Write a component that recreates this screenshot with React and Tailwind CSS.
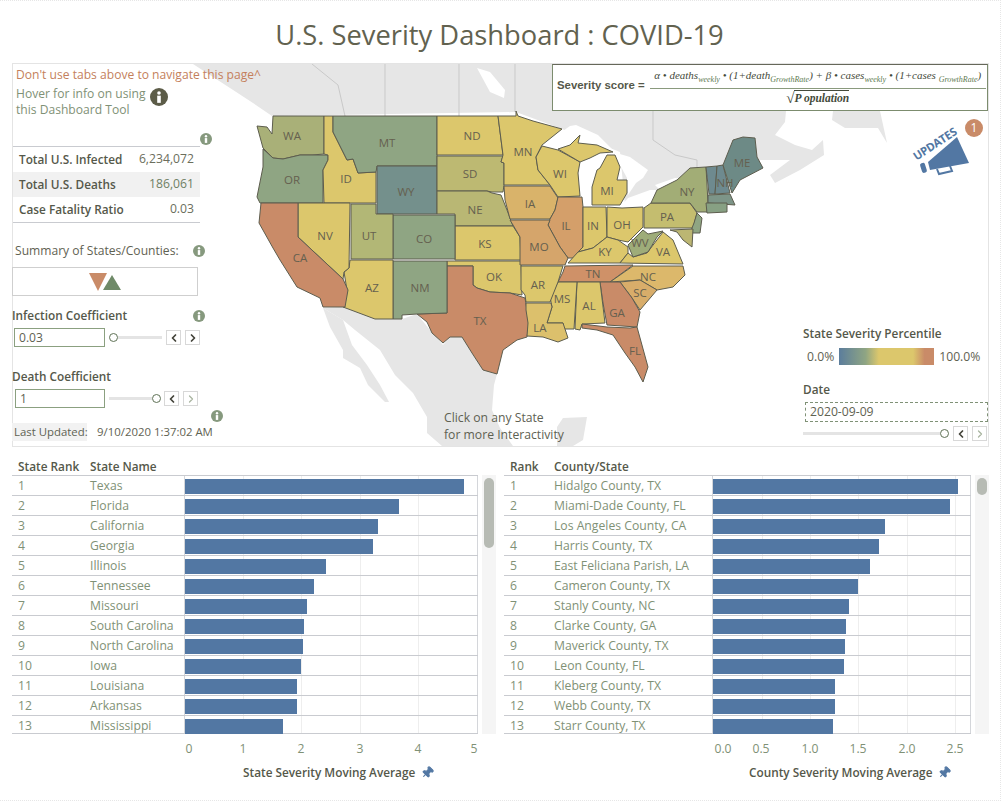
import { ChevronLeft, ChevronRight, Pin } from 'lucide-react';

const ORANGE = '#c98b68';
const GREEN = '#8fa583';
const YELLOW = '#dcc76c';

// state shapes are in page pixels, the map svg's viewBox starts at the panel corner
const STATES = [
  { id: 'WA', fill: '#a9b078', at: [292, 135], pts: '273,116 324,116 324,154 312,155 300,155 283,159 273,158 265,150 263,148 257,126 267,127 272,134' },
  { id: 'OR', fill: GREEN, at: [292, 179], pts: '263,149 273,158 283,159 300,155 328,155 328,160 323,170 323,203 260,203 257,197 263,167' },
  { id: 'ID', fill: YELLOW, at: [346, 178], pts: '324,116 333,116 333,132 347,160 353,159 358,173 376,172 376,203 324,203 323,170 328,160 328,155 324,154' },
  { id: 'MT', fill: GREEN, at: [387, 142], pts: '333,116 437,116 437,166 377,166 376,172 358,173 353,159 347,160 333,132' },
  { id: 'WY', fill: '#74908c', at: [406, 191], pts: '377,166 437,166 437,214 377,214' },
  { id: 'ND', fill: YELLOW, at: [472, 135], pts: '437,116 498,116 503,155 437,155' },
  { id: 'SD', fill: '#bdb972', at: [470, 173], pts: '437,156 503,156 501,162 504,163 504,185 503,192 492,192 487,191 437,191' },
  { id: 'NE', fill: '#b9b774', at: [475, 209], pts: '437,191 487,191 492,193 501,195 507,210 513,226 455,226 455,214 437,214' },
  { id: 'KS', fill: YELLOW, at: [485, 243], pts: '455,226 513,226 520,237 521,260 455,260' },
  { id: 'OK', fill: YELLOW, at: [494, 276], pts: '447,261 521,261 522,295 510,293 490,292 477,288 473,285 473,266 447,266' },
  { id: 'TX', fill: ORANGE, at: [480, 320], pts: '447,266 473,266 473,285 477,288 490,292 510,293 525,298 527,310 529,323 527,337 517,340 503,350 497,374 483,370 472,353 462,337 450,337 443,343 432,333 427,322 417,314 447,313' },
  { id: 'NM', fill: GREEN, at: [420, 287], pts: '393,261 447,261 447,313 417,314 402,315 402,319 393,319' },
  { id: 'CO', fill: GREEN, at: [424, 238], pts: '393,215 455,215 455,259 393,259' },
  { id: 'UT', fill: '#b2b776', at: [369, 235], pts: '351,204 376,204 376,214 393,214 393,259 351,259' },
  { id: 'AZ', fill: YELLOW, at: [372, 287], pts: '350,260 393,260 393,319 375,319 343,307 347,290 344,272 349,268' },
  { id: 'NV', fill: YELLOW, at: [325, 235], pts: '298,203 350,203 349,268 344,272 343,279 298,237' },
  { id: 'CA', fill: ORANGE, at: [300, 257], pts: '261,203 298,203 298,237 343,279 348,290 345,307 323,307 320,298 297,287 280,260 273,248 259,223' },
  { id: 'MN', fill: YELLOW, at: [523, 151], pts: '498,116 516,116 516,111 518,116 533,121 562,129 542,145 536,157 538,170 550,185 504,185 504,163 501,162 503,155' },
  { id: 'WI', fill: YELLOW, at: [560, 173], pts: '542,146 558,150 580,162 578,173 580,196 558,197 550,185 538,170 536,157' },
  { id: 'IA', fill: '#d9b36a', at: [530, 203], pts: '504,186 550,186 558,198 555,210 550,219 510,219 505,200' },
  { id: 'IL', fill: '#d49f6a', at: [566, 225], pts: '558,197 582,197 583,207 583,247 575,258 568,258 560,247 548,225 550,219 555,210' },
  { id: 'MO', fill: '#d5a56b', at: [539, 246], pts: '510,220 550,220 548,225 560,247 568,258 565,265 520,265 520,237 513,225' },
  { id: 'IN', fill: YELLOW, at: [593, 225], pts: '583,207 606,207 607,237 593,248 578,252 583,247' },
  { id: 'OH', fill: YELLOW, at: [622, 224], pts: '607,207 622,208 643,207 643,227 628,242 618,240 607,237' },
  { id: 'MI', fill: YELLOW, at: [607, 190], pts: '592,205 592,187 597,170 600,168 607,155 615,155 620,167 617,180 627,180 627,193 620,205' },
  { id: '', fill: YELLOW, pts: '558,149 570,145 580,135 578,143 597,145 613,152 600,153 590,158 580,162' },
  { id: 'KY', fill: YELLOW, at: [605, 251], pts: '568,263 578,252 593,248 607,237 618,240 628,247 628,253 620,263' },
  { id: 'TN', fill: '#cf9168', at: [593, 273], pts: '565,266 633,265 610,282 558,282 563,272' },
  { id: 'VA', fill: YELLOW, at: [663, 251], pts: '620,263 628,253 633,257 647,253 663,232 673,240 683,264' },
  { id: 'WV', fill: '#9eac79', at: [640, 242], pts: '628,245 643,230 648,234 663,231 657,237 648,252 633,257' },
  { id: 'NC', fill: '#dcb86b', at: [648, 276], pts: '633,266 683,266 685,275 673,287 657,290 640,280 610,282' },
  { id: 'SC', fill: '#d8ad6a', at: [640, 292], pts: '620,282 640,280 657,290 640,310 632,298' },
  { id: 'GA', fill: ORANGE, at: [617, 312], pts: '600,282 620,282 632,298 640,312 637,327 607,325 603,303' },
  { id: 'AL', fill: YELLOW, at: [589, 305], pts: '577,282 600,282 605,323 582,324 580,330 575,329' },
  { id: 'MS', fill: YELLOW, at: [562, 298], pts: '558,282 577,282 574,329 562,329 563,323 547,323 552,307 550,297' },
  { id: 'AR', fill: YELLOW, at: [538, 284], pts: '521,266 563,266 558,282 550,302 526,302 525,295 521,290' },
  { id: 'LA', fill: '#dcc06c', at: [540, 327], pts: '526,303 551,303 552,307 547,323 563,323 568,338 558,342 543,337 527,336 528,323 526,310' },
  { id: 'FL', fill: ORANGE, at: [635, 350], pts: '582,324 607,327 630,328 637,327 648,367 643,382 635,367 625,353 613,335 597,330 582,328' },
  { id: 'PA', fill: '#c4bd6f', at: [667, 216], pts: '651,203 690,203 697,213 693,228 644,228 644,208' },
  { id: 'NY', fill: '#a2ad76', at: [687, 191], pts: '651,203 657,190 677,180 690,168 706,167 708,203 707,212 697,212 690,203' },
  { id: '', fill: GREEN, pts: '697,213 702,218 700,233 690,233 694,223' },
  { id: '', fill: '#bcb672', pts: '670,230 693,229 692,247 683,240 677,232' },
  { id: 'VT', fill: '#6e8a8f', pts: '706,167 717,166 715,194 709,194' },
  { id: 'NH', fill: '#6e8a8f', at: [725, 182], pts: '717,166 723,165 730,193 715,194' },
  { id: '', fill: '#7d9588', pts: '708,195 730,194 735,205 708,203' },
  { id: '', fill: '#87a083', pts: '706,203 727,203 727,212 707,213' },
  { id: 'ME', fill: '#6d8a86', at: [742, 162], pts: '723,165 733,140 743,137 755,138 757,157 763,168 740,180 732,193' },
];

const STATE_ROWS = [
  ['Texas', 279], ['Florida', 214], ['California', 193], ['Georgia', 188], ['Illinois', 141],
  ['Tennessee', 129], ['Missouri', 122], ['South Carolina', 119], ['North Carolina', 118],
  ['Iowa', 116], ['Louisiana', 112], ['Arkansas', 112], ['Mississippi', 98],
];
const COUNTY_ROWS = [
  ['Hidalgo County, TX', 245], ['Miami-Dade County, FL', 237], ['Los Angeles County, CA', 172],
  ['Harris County, TX', 166], ['East Feliciana Parish, LA', 157], ['Cameron County, TX', 145],
  ['Stanly County, NC', 136], ['Clarke County, GA', 133], ['Maverick County, TX', 132],
  ['Leon County, FL', 131], ['Kleberg County, TX', 122], ['Webb County, TX', 122], ['Starr County, TX', 120],
];

function InfoDot({ big }) {
  return (
    <svg viewBox="0 0 20 20" className={big ? 'w-[18px] h-[18px]' : 'w-[12px] h-[12px]'}>
      <circle cx="10" cy="10" r="10" fill={big ? '#5c5c48' : '#86997e'} />
      <circle cx="10" cy="5.5" r="2" fill="white" />
      <rect x="8" y="8.5" width="4" height="8" fill="white" />
    </svg>
  );
}

function Stepper({ nextOff }) {
  return (
    <div className="flex gap-[4px]">
      <div className="w-[15px] h-[15px] border border-[#d8d8d8] bg-white flex items-center justify-center">
        <ChevronLeft size={12} strokeWidth={3.5} className="text-[#44443a]" />
      </div>
      <div className="w-[15px] h-[15px] border border-[#d8d8d8] bg-white flex items-center justify-center">
        <ChevronRight size={12} strokeWidth={nextOff ? 2.5 : 3.5} className={nextOff ? 'text-[#a9b5a0]' : 'text-[#44443a]'} />
      </div>
    </div>
  );
}

function Slider({ end, width }) {
  return (
    <div className={`flex items-center ${width}`}>
      {end ? (
        <>
          <div className="flex-1 h-[3px] bg-[#e4e4e4]" />
          <div className="w-[9px] h-[9px] rounded-full border border-[#5f7256] bg-white" />
        </>
      ) : (
        <>
          <div className="w-[9px] h-[9px] rounded-full border border-[#5f7256] bg-white" />
          <div className="flex-1 h-[3px] bg-[#e4e4e4]" />
        </>
      )}
    </div>
  );
}

function StatRow({ label, value, shaded, valueColor }) {
  return (
    <div className={`flex justify-between items-center h-[25px] pl-[6px] pr-[6px] ${shaded ? 'bg-[#f1f1f1]' : ''}`}>
      <span className="text-[11.8px] font-semibold text-[#55584a]">{label}</span>
      <span className={`text-[12.2px] ${valueColor}`}>{value}</span>
    </div>
  );
}

function MapLayer() {
  return (
    <svg viewBox="13 64 975 382" className="absolute left-0 top-0 w-[975px] h-[382px]">
      <g fill="#e6e6e6">
        <polygon points="193,64 552,64 552,111 786,111 785,122 775,135 795,145 812,150 823,140 824,155 800,170 775,183 770,175 790,160 760,160 740,180 723,165 706,167 690,168 677,180 657,190 640,205 625,205 620,152 562,129 516,112 272,116 253,103 230,88" />
        <polygon points="833,111 880,111 887,143 878,128 845,128 832,120" />
        <polygon points="323,308 345,307 375,319 402,319 417,314 430,330 443,345 450,337 462,337 472,353 483,370 497,374 494,385 492,410 500,428 513,446 442,446 427,433 427,417 413,393 395,375 380,350 355,330 343,320" />
        <polygon points="323,308 343,320 352,345 367,365 380,385 389,402 385,402 368,385 360,368 343,358 343,350 330,327" />
        <polygon points="557,427 563,418 587,417 583,440 573,446 557,446" />
      </g>
      <g fill="white">
        <polygon points="477,68 490,72 505,90 504,98 490,92" />
        <polygon points="543,146 560,133 570,126 576,125 598,135 611,148 615,153 596,152 582,161 572,148 558,150" />
        <polygon points="580,163 597,155 607,154 595,170 592,177 590,205 584,207 582,195 578,175" />
        <polygon points="613,152 630,157 648,170 643,178 636,183 628,195 627,178" />
        <polygon points="620,207 628,198 650,190 657,190 651,203 644,207" />
        <polygon points="655,185 675,178 682,179 660,190" />
      </g>
      <g fill="none" stroke="#c9c9c9" strokeWidth="1">
        <path d="M312 64 L338 85 L345 116" />
        <path d="M385 64 V116 M459 64 V116 M515 64 V112" />
        <path d="M653 111 V140 L675 155 L697 160 V167" />
      </g>
      <g stroke="#5d5d4e" strokeWidth="1" strokeLinejoin="round">
        {STATES.map((s, i) => (
          <polygon key={i} points={s.pts} fill={s.fill} />
        ))}
      </g>
      <g fontFamily="'Open Sans', sans-serif" fontSize="11.5" fill="#65604f" textAnchor="middle" dominantBaseline="central">
        {STATES.filter((s) => s.at).map((s) => (
          <text key={s.id} x={s.at[0]} y={s.at[1]}>{s.id}</text>
        ))}
      </g>
    </svg>
  );
}

function Formula() {
  const sub = 'text-[8px] text-[#5d7a50] align-[-3px]';
  return (
    <div className="w-[436px] h-[47px] border border-[#7c8c6e] border-t-[#66685a] bg-white flex items-center pl-[4px] pb-[3px] gap-[5px]">
      <span className="font-['Liberation_Sans',sans-serif] text-[11.4px] font-bold text-[#55584a] whitespace-nowrap">Severity score =</span>
      <div className="w-[336px] flex flex-col items-center font-['Liberation_Serif',serif] text-[#444a3a]">
        <div className="w-full border-b border-[#8a9a7d] text-[11px] italic whitespace-nowrap leading-[16px] text-center">
          α • deaths<span className={sub}>weekly</span> • (1+death<span className={sub}>GrowthRate</span>) + β • cases<span className={sub}>weekly</span> • (1+cases <span className={sub}>GrowthRate</span>)
        </div>
        <div className="flex items-end text-[11.5px] font-bold italic leading-[14px] mt-[1px]">
          <span className="text-[15px] not-italic">√</span>
          <span className="border-t border-[#444a3a]">P opulation</span>
        </div>
      </div>
    </div>
  );
}

function UpdatesBadge() {
  return (
    <div className="absolute left-[900px] top-[56px] w-[75px] h-[60px]">
      <svg viewBox="0 0 75 60" className="absolute left-0 top-0 w-[75px] h-[60px]">
        <polygon points="15,42 44,17 56,43 17,50" fill="#5277a3" />
        <rect x="8" y="43" width="5" height="10" rx="2" transform="rotate(-18 10 48)" fill="#5277a3" />
        <path d="M24 49 L26 54 L39 51 L37 46" fill="none" stroke="#5277a3" strokeWidth="2" />
      </svg>
      <span className="absolute left-[-3px] top-[15px] origin-center -rotate-[33deg] text-[11.4px] font-bold text-[#5277a3] font-['Open_Sans',sans-serif] tracking-tight">UPDATES</span>
      <span className="absolute right-[5px] top-[-1px] w-[18px] h-[18px] rounded-full bg-[#c98b68] text-white text-[12px] leading-[18px] text-center">1</span>
    </div>
  );
}

function BarTable({ head1, head2, rows, rankCol, nameCol, barCol, grid, ticks, title, titleClass, thumb }) {
  return (
    <div>
      <div className="flex h-[17px] items-center text-[11.8px] font-semibold text-[#55584a]">
        <span className={`${rankCol} pl-[6px]`}>{head1}</span>
        <span className={nameCol}>{head2}</span>
      </div>
      <div className="flex">
        <div className="relative border-t border-[#c9cbd0]">
          {rows.map(([name, w], i) => (
            <div key={name} className="flex h-[20px] border-b border-[#c9cbd0] last:h-[18px] text-[12.2px] text-[#7f9176]">
              <span className={`${rankCol} pl-[6px] leading-[19px]`}>{i + 1}</span>
              <span className={`${nameCol} leading-[19px] whitespace-nowrap`}>{name}</span>
              <div className={`${barCol} relative border-l border-r border-[#d4d6da] pt-[3px]`}>
                {grid.map((x) => (
                  <span key={x} className="absolute top-0 bottom-0 w-px bg-[#eeeeee]" style={{ left: x }} />
                ))}
                <div className="relative h-[15px] bg-[#5277a3]" style={{ width: w }} />
              </div>
            </div>
          ))}
        </div>
        <div className="ml-[4px] w-[14px] bg-[#f5f5f5] px-[2px] pt-[3px]">
          <div className={`w-[10px] rounded-full bg-[#b7bbb4] ${thumb}`} />
        </div>
      </div>
      <div className="flex">
        <div className={rankCol} />
        <div className={nameCol} />
        <div className={`${barCol} relative h-[26px] text-[12.2px] text-[#7f9176]`}>
          {ticks.map(([label, x]) => (
            <span key={label} className="absolute top-[6px] -translate-x-1/2" style={{ left: x }}>{label}</span>
          ))}
        </div>
      </div>
      <div className={`flex items-center gap-[6px] text-[11.8px] font-semibold text-[#55584a] ${titleClass}`}>
        <span className="whitespace-nowrap">{title}</span>
        <Pin size={13} strokeWidth={2} className="rotate-45 text-[#5277a3] fill-[#5277a3]" />
      </div>
    </div>
  );
}

export default function App() {
  return (
    <div className="w-[1001px] h-[801px] bg-white font-['Open_Sans',sans-serif] overflow-hidden border-t border-r border-b border-dotted border-[#e6e6e6]">
      <h1 className="h-[62px] pt-[15px] text-center text-[27.3px] leading-[38px] text-[#62624f] pr-[1px]">
        U.S. Severity Dashboard : COVID-19
      </h1>

      <div className="relative ml-[12px] w-[977px] h-[384px] border border-[#e4e4e4]">
        <MapLayer />
        <div className="relative flex h-full">
          {/* left controls */}
          <div className="w-[202px] shrink-0 text-[12.1px]">
            <p className="h-[22px] pl-[3px] pt-[2px] leading-[18px] text-[#c47f5c] whitespace-nowrap">Don't use tabs above to navigate this page^</p>
            <div className="relative pl-[3px] leading-[16px] text-[#7f9176]">
              <p>Hover for info on using</p>
              <p>this Dashboard Tool</p>
              <span className="absolute left-[137px] top-[2px]"><InfoDot big /></span>
            </div>
            <div className="flex justify-end h-[12px] mt-[15px] w-[199px]"><InfoDot /></div>
            <div className="mt-[1px] w-[187px] border-t border-b border-[#c9cbd0]">
              <StatRow label="Total U.S. Infected" value="6,234,072" valueColor="text-[#6b6e5c]" />
              <StatRow label="Total U.S. Deaths" value="186,061" shaded valueColor="text-[#6f8064]" />
              <StatRow label="Case Fatality Ratio" value="0.03" valueColor="text-[#6b6e5c]" />
            </div>
            <div className="flex justify-between items-center w-[192px] h-[14px] mt-[21px] pl-[2px]">
              <span className="text-[#5f6252] whitespace-nowrap">Summary of States/Counties:</span>
              <InfoDot />
            </div>
            <div className="mt-[9px] -ml-px w-[186px] h-[29px] border border-[#cfcfcf] flex justify-center items-center">
              <svg viewBox="0 0 34 20" className="w-[34px] h-[20px]">
                <polygon points="1,1 19,1 10,19" fill="#c98b68" />
                <polygon points="15,18 33,18 24,3" fill="#6f8a68" />
              </svg>
            </div>
            <div className="flex justify-between items-center w-[193px] h-[16px] mt-[12px] -ml-px">
              <span className="font-semibold text-[11.8px] text-[#55584a]">Infection Coefficient</span>
              <InfoDot />
            </div>
            <div className="flex items-center mt-[4px] pl-px">
              <div className="w-[91px] h-[19px] border border-[#8ba080] bg-white pl-[4px] leading-[17px] text-[#5f6252]">0.03</div>
              <Slider width="w-[53px] ml-[4px] mr-[4px]" />
              <Stepper />
            </div>
            <p className="mt-[21px] -ml-px font-semibold text-[11.8px] leading-[16px] text-[#55584a]">Death Coefficient</p>
            <div className="flex items-center mt-[5px] pl-[2px]">
              <div className="w-[90px] h-[19px] border border-[#8ba080] bg-white pl-[4px] leading-[17px] text-[#5f6252]">1</div>
              <Slider end width="w-[52px] ml-[4px] mr-[3px]" />
              <Stepper nextOff />
            </div>
            <div className="flex justify-end h-[12px] mt-[2px] w-[210px]"><InfoDot /></div>
            <div className="flex items-center -ml-px h-[16px] mt-[2px] text-[11.4px] whitespace-nowrap text-[#5f6252]">
              <span className="w-[75px] pl-[2px] bg-[#f2f2f2] mr-[10px]">Last Updated:</span>
              <span>9/10/2020 1:37:02 AM</span>
            </div>
          </div>

          {/* center hint */}
          <div className="w-[337px] shrink-0 flex flex-col justify-end pb-[3px] pl-[229px] text-[12.2px] leading-[17px] text-[#5e6152] whitespace-nowrap">
            <p>Click on any State</p>
            <p>for more Interactivity</p>
          </div>

          {/* formula and legend */}
          <div className="w-[436px] shrink-0 flex flex-col items-end justify-between">
            <Formula />
            <div className="w-[185px] pb-[5px]">
              <p className="font-semibold text-[11.8px] leading-[16px] text-[#55584a]">State Severity Percentile</p>
              <div className="flex items-center gap-[5px] mt-[7px] pl-[4px] text-[12.2px] text-[#5f6252]">
                <span>0.0%</span>
                <div className="w-[95px] h-[17px] bg-[linear-gradient(90deg,#5b7d9c_0%,#8fa583_28%,#dcc76c_42%,#dcc76c_78%,#c98b68_90%,#c98b68_100%)]" />
                <span>100.0%</span>
              </div>
              <p className="mt-[15px] font-semibold text-[11.8px] leading-[16px] text-[#55584a]">Date</p>
              <div className="mt-[5px] ml-[2px] w-[183px] h-[20px] border border-dashed border-[#7f9176] bg-white pl-[4px] text-[12.2px] leading-[18px] text-[#5f6252]">2020-09-09</div>
              <div className="flex items-center mt-[4px]">
                <Slider end width="w-[146px] mr-[4px]" />
                <Stepper nextOff />
              </div>
            </div>
          </div>
          <UpdatesBadge />
        </div>
      </div>

      {/* ranked tables */}
      <div className="flex mt-[11px] pl-[12px]">
        <div className="w-[492px] shrink-0">
          <BarTable
            head1="State Rank"
            head2="State Name"
            rows={STATE_ROWS}
            rankCol="w-[78px] shrink-0"
            nameCol="w-[94px] shrink-0"
            barCol="w-[294px] shrink-0"
            grid={[58, 116, 175, 233]}
            ticks={[['0', 5], ['1', 59], ['2', 117], ['3', 176], ['4', 234], ['5', 290]]}
            title="State Severity Moving Average"
            titleClass="mt-[4px] pl-[231px]"
            thumb="h-[70px]"
          />
        </div>
        <div className="flex-1">
          <BarTable
            head1="Rank"
            head2="County/State"
            rows={COUNTY_ROWS}
            rankCol="w-[50px] shrink-0"
            nameCol="w-[158px] shrink-0"
            barCol="w-[259px] shrink-0"
            grid={[49, 97, 145, 194, 242]}
            ticks={[['0.0', 11], ['0.5', 49], ['1.0', 98], ['1.5', 146], ['2.0', 195], ['2.5', 243]]}
            title="County Severity Moving Average"
            titleClass="mt-[4px] pl-[245px]"
            thumb="h-[17px]"
          />
        </div>
      </div>
    </div>
  );
}
